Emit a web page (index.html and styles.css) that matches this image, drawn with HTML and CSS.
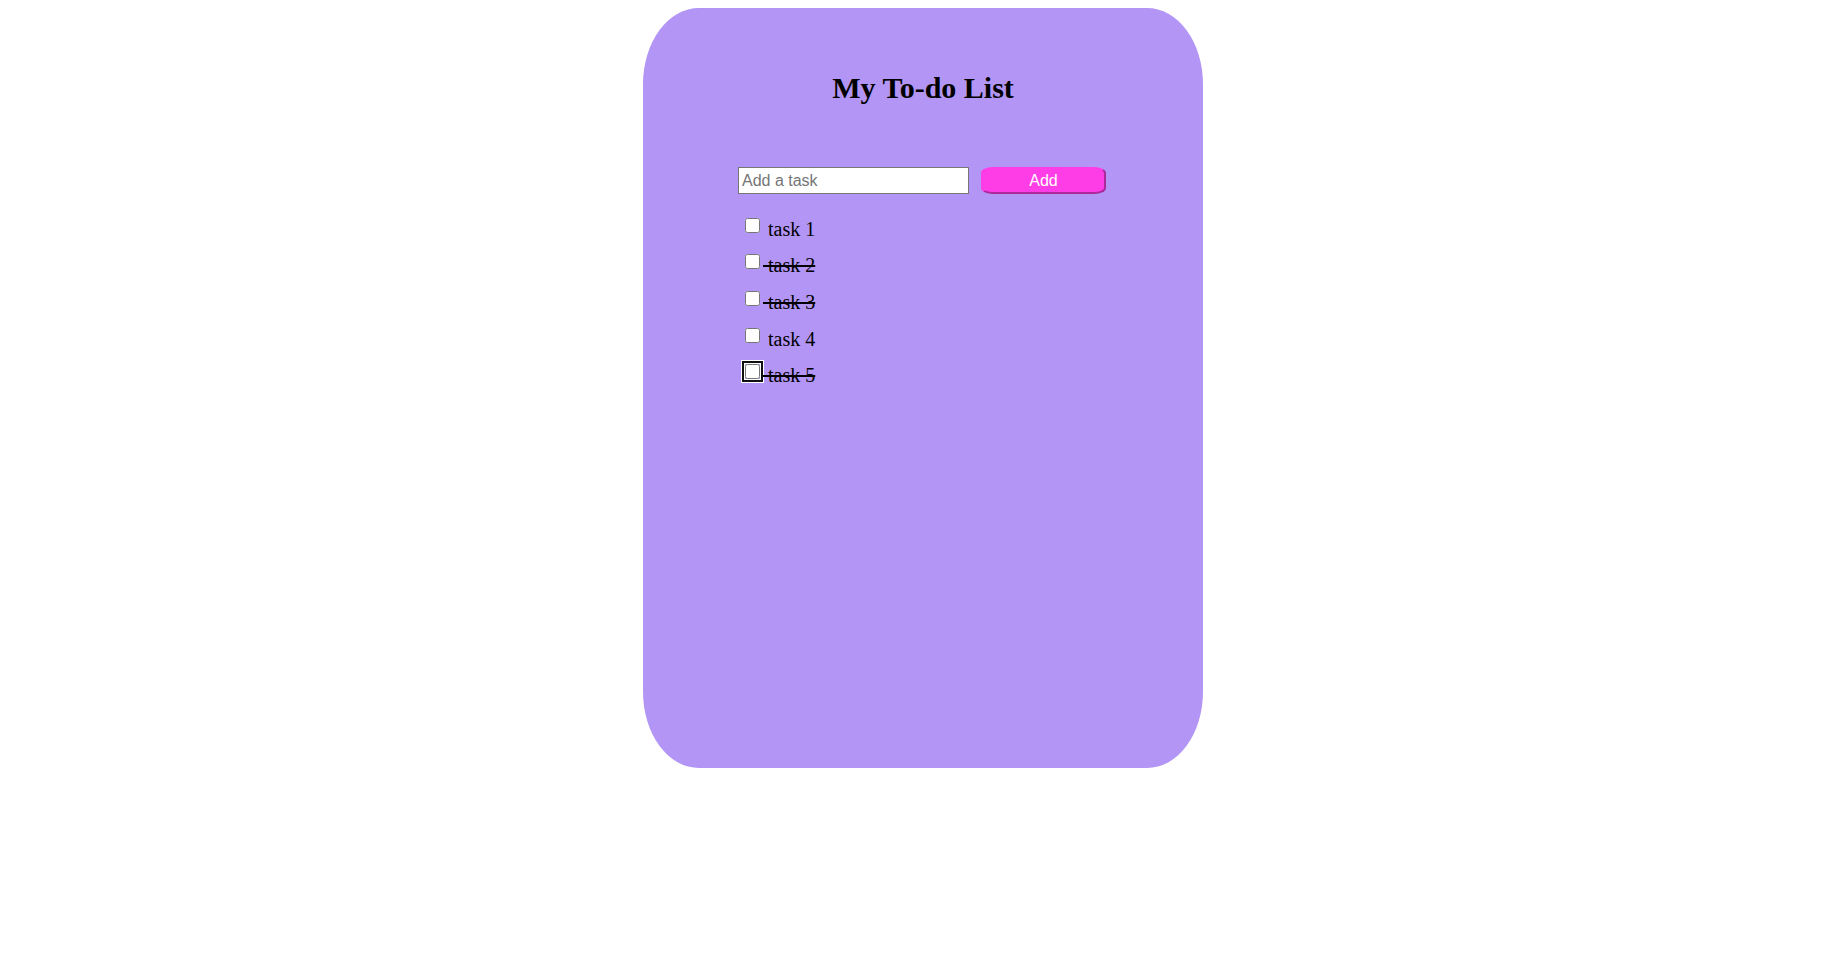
FILE: index.html
```html
<!DOCTYPE html>
<html lang="en">
<head>
    <meta charset="UTF-8">
    <meta name="viewport" content="width=device-width, initial-scale=1.0">
    <title>My To-do List</title>
    <link rel="stylesheet" href="styles.css">
</head>
<body>
    <div class="todo-card">
        <h1 class="title">My To-do List</h1>

        <div class="todo-body">
            <form class="add-form">
                <input type="text" class="task-input" placeholder="Add a task">
                <button type="submit" class="add-btn">Add</button>
            </form>

            <ul class="task-list">
                <li class="task-item"><input type="checkbox" class="task-check"> task 1</li>
                <li class="task-item done"><input type="checkbox" class="task-check"> task 2</li>
                <li class="task-item done"><input type="checkbox" class="task-check"> task 3</li>
                <li class="task-item"><input type="checkbox" class="task-check"> task 4</li>
                <li class="task-item done"><input type="checkbox" class="task-check focused"> task 5</li>
            </ul>
        </div>
    </div>
</body>
</html>
```

FILE: styles.css
```css
body {
    margin: 8px;
    font-family: "Liberation Serif", "Times New Roman", serif;
    background: #fff;
    color: #000;
}

.todo-card {
    width: 560px;
    height: 760px;
    margin: 0 auto;
    padding-top: 63px;
    box-sizing: border-box;
    background: #b295f5;
    border-radius: 10%;
}

.title {
    margin: 0;
    font-size: 30px;
    font-weight: bold;
    text-align: center;
}

.todo-body {
    width: 368px;
    margin: 62px auto 0;
    transform: translateX(-1px);
}

.add-form {
    display: flex;
    gap: 12px;
}

.task-input {
    width: 231px;
    height: 27px;
    box-sizing: border-box;
    padding: 0 3px;
    border: 1px solid #767676;
    background: #fff;
    font-family: "Liberation Sans", Arial, sans-serif;
    font-size: 16px;
    color: #000;
}

.task-input::placeholder {
    color: #757575;
}

.add-btn {
    width: 125px;
    height: 27px;
    box-sizing: border-box;
    padding: 0;
    background: #ff3de6;
    border: 2px outset #ff3de6;
    border-radius: 12px / 6px;
    color: #fff;
    font-family: "Liberation Sans", Arial, sans-serif;
    font-size: 16px;
}

.task-list {
    list-style: none;
    margin: 23.8px 0 0;
    padding: 0 0 0 3px;
}

.task-item {
    font-size: 20px;
    margin-bottom: 13.6px;
}

.task-item.done {
    text-decoration: line-through;
}

.task-check {
    width: 15px;
    height: 15px;
    margin: 0 3px 0 4px;
    vertical-align: 3px;
}

.task-check.focused {
    outline: 2px solid #101010;
    outline-offset: 1px;
    box-shadow: 0 0 0 4px #fff;
}
```
